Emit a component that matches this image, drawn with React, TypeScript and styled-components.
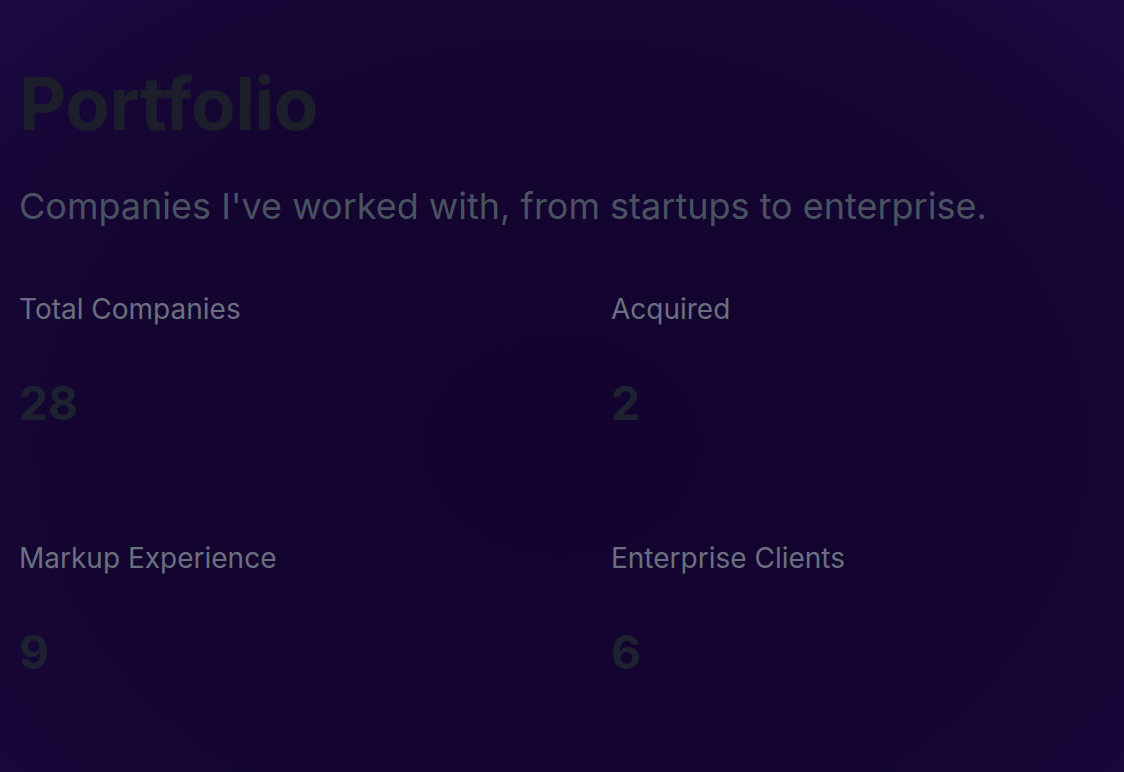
import React from "react";
import styled, { createGlobalStyle } from "styled-components";

const Global = createGlobalStyle`
  html, body { margin: 0; padding: 0; }
  body {
    font-family: Inter, "Noto Sans", sans-serif;
    background: #13052f;
  }
`;

const Page = styled.main`
  box-sizing: border-box;
  width: 1124px;
  height: 772px;
  overflow: hidden;
  padding: 60px 19px 0 19px;
  background:
    radial-gradient(ellipse 75% 85% at 50% 58%, #12042f 0%, #13052f 55%, #170739 80%, #1f0b49 100%);
`;

const Title = styled.h1`
  margin: 0;
  font-size: 73px;
  font-weight: 700;
  line-height: 88px;
  letter-spacing: -0.5px;
  color: #1c1f2b;
`;

const Subtitle = styled.p`
  margin: 36px 0 0 0;
  font-size: 36px;
  line-height: 44px;
  color: #4a5262;
`;

const Stats = styled.section`
  display: grid;
  grid-template-columns: 592px 1fr;
  margin-top: 63px;
`;

const Stat = styled.div`
  display: flex;
  flex-direction: column;
  height: 249px;
`;

const Label = styled.div`
  font-size: 28px;
  line-height: 36px;
  color: #6b7080;
`;

const Value = styled.div`
  margin-top: 48px;
  font-size: 46px;
  font-weight: 700;
  line-height: 56px;
  color: #1e2230;
`;

const stats = [
  { label: "Total Companies", value: "28" },
  { label: "Acquired", value: "2" },
  { label: "Markup Experience", value: "9" },
  { label: "Enterprise Clients", value: "6" },
];

export default function App() {
  return (
    <>
      <Global />
      <Page>
        <Title>Portfolio</Title>
        <Subtitle>Companies I've worked with, from startups to enterprise.</Subtitle>
        <Stats>
          {stats.map((s) => (
            <Stat key={s.label}>
              <Label>{s.label}</Label>
              <Value>{s.value}</Value>
            </Stat>
          ))}
        </Stats>
      </Page>
    </>
  );
}
